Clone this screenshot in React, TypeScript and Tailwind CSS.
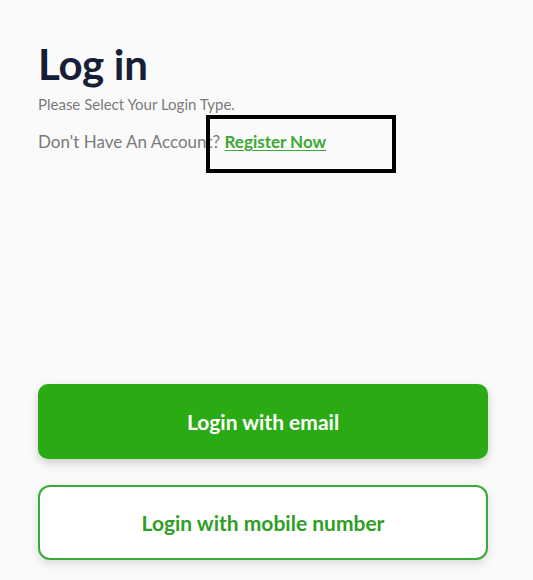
import React from 'react'

const App = () => {
  return (
    <div className="relative min-h-[580px] w-full bg-[#fafafa] px-[38px] pt-[37px] font-['Lato','Noto_Sans',sans-serif]">
      <h1 className="text-[42px] font-bold leading-[54px] tracking-[-0.3px] text-[#152036]">Log in</h1>
      <p className="mt-[3px] text-[15px] leading-[20px] text-[#7a7a7a]">Please Select Your Login Type.</p>
      <p className="mt-[16px] text-[17px] leading-[24px] text-[#7a7a7a]">
        Don't Have An Account?{' '}
        <a href="#" className="font-bold text-[#3aa935] underline underline-offset-2">Register Now</a>
      </p>

      {/* annotation box */}
      <div className="absolute left-[206px] top-[115px] h-[58px] w-[190px] border-[4px] border-black" />

      <div className="mt-[230px] flex flex-col gap-[26px] pr-[7px]">
        <button className="h-[75px] w-full rounded-[10px] bg-[#2aab14] text-[21px] font-bold text-white shadow-[0_4px_10px_rgba(0,0,0,0.18)]">
          Login with email
        </button>
        <button className="h-[75px] w-full rounded-[12px] border-2 border-[#3aa935] bg-white text-[21px] font-bold text-[#2f9e24] shadow-[0_4px_10px_rgba(0,0,0,0.12)]">
          Login with mobile number
        </button>
      </div>
    </div>
  )
}

export default App
